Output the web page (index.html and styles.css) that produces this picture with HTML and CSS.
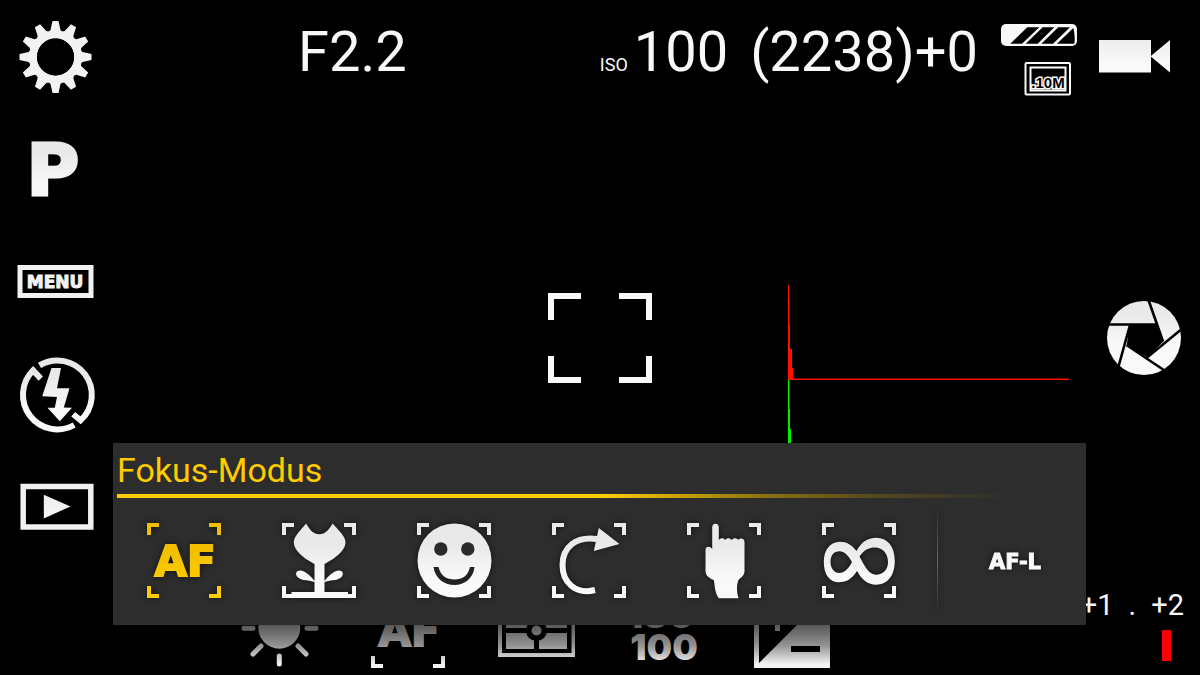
FILE: index.html
```html
<!DOCTYPE html>
<html lang="de">
<head>
    <meta charset="UTF-8">
    <meta name="viewport" content="width=device-width, initial-scale=1.0">
    <title>Kamera</title>
    <link rel="stylesheet" href="styles.css">
</head>
<body>
    <svg class="defs" aria-hidden="true">
        <defs>
            <linearGradient id="light" gradientUnits="userSpaceOnUse" x1="0" y1="0" x2="0" y2="80">
                <stop offset="0.3" stop-color="#e9e9e9"/>
                <stop offset="0.7" stop-color="#f9f9f9"/>
            </linearGradient>
            <linearGradient id="gold" gradientUnits="userSpaceOnUse" x1="0" y1="0" x2="0" y2="76">
                <stop offset="0.3" stop-color="#f0bd00"/>
                <stop offset="0.8" stop-color="#ffcc00"/>
            </linearGradient>
            <linearGradient id="dim" gradientUnits="userSpaceOnUse" x1="0" y1="0" x2="0" y2="76">
                <stop offset="0.4" stop-color="#505050"/>
                <stop offset="0.7" stop-color="#929292"/>
                <stop offset="0.95" stop-color="#f2f2f2"/>
            </linearGradient>
            <g id="corners">
                <path d="M1,13V1H13V5H5V13ZM63,1H75V13H71V5H63ZM1,64V76H13V72H5V64ZM71,64H75V76H63V72H71Z"/>
            </g>
            <polygon id="tooth" points="-3,-36 3,-36 5,-27 8,-24 -8,-24 -5,-27"/>
        </defs>
    </svg>

    <div class="camera">
        <div class="viewfinder">
            <svg class="focus-frame" viewBox="0 0 104 90" aria-hidden="true">
                <path d="M3,27V3H33M71,3H101V27M3,63V87H33M71,87H101V63"/>
            </svg>
        </div>

        <svg class="histogram" viewBox="0 0 282 190" aria-hidden="true">
            <path class="green" d="M0,190V95H1.500V124H2V144H3V190Z"/>
            <path class="red" d="M0,95V0H1V14H1.500V40H2V64H4V83H5V93.500H281V95Z"/>
        </svg>

        <nav class="rail">
            <button class="rail-button" aria-label="Einstellungen">
                <svg class="rail-icon" viewBox="0 0 80 80">
                    <g transform="translate(38.5 41)" fill="#f2f2f2">
                        <use href="#tooth"/>
                        <use href="#tooth" transform="rotate(30)"/>
                        <use href="#tooth" transform="rotate(60)"/>
                        <use href="#tooth" transform="rotate(90)"/>
                        <use href="#tooth" transform="rotate(120)"/>
                        <use href="#tooth" transform="rotate(150)"/>
                        <use href="#tooth" transform="rotate(180)"/>
                        <use href="#tooth" transform="rotate(210)"/>
                        <use href="#tooth" transform="rotate(240)"/>
                        <use href="#tooth" transform="rotate(270)"/>
                        <use href="#tooth" transform="rotate(300)"/>
                        <use href="#tooth" transform="rotate(330)"/>
                        <circle r="22.5" fill="none" stroke="#f2f2f2" stroke-width="8"/>
                        <circle r="18.5" fill="#000"/>
                    </g>
                </svg>
            </button>
            <button class="rail-button">
                <svg class="rail-icon" viewBox="0 0 80 80">
                    <text class="wide-text program" x="36" y="66">P</text>
                </svg>
            </button>
            <button class="rail-button">
                <svg class="rail-icon" viewBox="0 0 80 80">
                    <rect x="3" y="26.5" width="71" height="28" fill="none" stroke="#f2f2f2" stroke-width="5"/>
                    <text class="wide-text menu" x="38" y="47">MENU</text>
                </svg>
            </button>
            <button class="rail-button" aria-label="Blitz">
                <svg class="rail-icon" viewBox="0 0 80 80">
                    <path d="M22.5,11.4A34.5,34.5 0 0 1 63.6,66.4L56.2,60.3M57.2,71A34.5,34.5 0 0 1 16.1,16.4L23.8,24.6" fill="none" stroke="url(#light)" stroke-width="6"/>
                    <polygon points="34.5,14 44,14 40,34.3 52.5,34.3 46.8,53.6 55,53.8 42.8,67.3 30.5,53.8 37.8,53.8 40,43 25.2,42.3" fill="url(#light)"/>
                </svg>
            </button>
            <button class="rail-button" aria-label="Wiedergabe">
                <svg class="rail-icon" viewBox="0 0 80 80">
                    <rect x="6.2" y="20.5" width="67.6" height="40.5" fill="none" stroke="#f0f0f0" stroke-width="5.5"/>
                    <polygon points="26.8,28.7 53.5,40.4 26.8,52.4" fill="url(#light)"/>
                </svg>
            </button>
        </nav>

        <main class="center">
            <header class="readout">
                <span class="value">F2.2</span>
                <div class="readout-right">
                    <span class="value"><small class="unit">ISO</small>100</span>
                    <span class="value">(2238)+0</span>
                    <div class="status">
                        <svg class="battery" viewBox="0 0 78 26" role="img" aria-label="Akku">
                            <rect x="1" y="2" width="76" height="22" rx="5" fill="#f8f8f8"/>
                            <path d="M27.3,5.3H39.3L22,21.7H10.3ZM42.7,5.3H54.3L37.7,21.7H25.7ZM58.3,5.3H70L53,21.7H41.3ZM73.3,6Q75.5,14 74.3,21.7H57Z" fill="#000"/>
                        </svg>
                        <svg class="image-size" viewBox="0 0 54 36">
                            <rect x="1.5" y="2" width="44.5" height="31.5" rx="1" fill="#000" stroke="#f8f8f8" stroke-width="2"/>
                            <rect x="6.5" y="6.5" width="35" height="23" fill="none" stroke="#f8f8f8" stroke-width="2"/>
                            <text class="size-text" x="24" y="27">.10M</text>
                        </svg>
                    </div>
                </div>
            </header>

            <div class="shortcuts">
                <button class="shortcut" aria-label="Weißabgleich">
                    <svg class="icon dim" viewBox="0 0 76 76">
                        <circle cx="37.3" cy="35.7" r="21"/>
                        <path class="rays" d="M2,36.3H11M65,36.3H74M19,54L11,62M56,54L64,62M37.3,64V72M19,18L11,10M56,18L64,10M37.3,8V1"/>
                    </svg>
                </button>
                <button class="shortcut">
                    <svg class="icon dim" viewBox="0 0 76 76">
                        <use href="#corners"/>
                        <text class="wide-text af" x="39" y="54">AF</text>
                    </svg>
                </button>
                <button class="shortcut" aria-label="Belichtungsmessung">
                    <svg class="icon dim" viewBox="0 0 76 76">
                        <path fill-rule="evenodd" d="M0,12H77V65H0ZM4,16V61H73.500V16Z"/>
                        <path d="M8,20H36V36H8ZM41,20H69V36H41ZM8,41H36V57H8ZM41,41H69V57H41Z"/>
                        <circle cx="38.500" cy="38.500" r="10.500" fill="#000"/>
                        <circle cx="38.500" cy="38.500" r="5"/>
                    </svg>
                </button>
                <button class="shortcut">
                    <svg class="icon dim" viewBox="0 0 76 76">
                        <text class="iso-text"><tspan x="38" y="36">ISO</tspan><tspan x="38" y="68">100</tspan></text>
                    </svg>
                </button>
                <button class="shortcut" aria-label="Belichtungskorrektur">
                    <svg class="icon dim" viewBox="0 0 76 76">
                        <path fill-rule="evenodd" d="M0,0H76V76H0ZM5,5V71L71,5ZM37,54V60H66V54Z"/>
                        <path d="M21,10H26V22H38V27H26V39H21V27H9V22H21Z"/>
                    </svg>
                </button>
            </div>
        </main>

        <aside class="side">
            <button class="side-button" aria-label="Video">
                <svg class="side-icon" viewBox="0 0 96 96">
                    <path d="M4,32H56V64.500H4ZM75,32V64.500L55.500,48.200Z" fill="url(#light)"/>
                </svg>
            </button>
            <button class="side-button" aria-label="Auslöser">
                <svg class="side-icon" viewBox="0 0 96 96">
                    <circle cx="49" cy="48" r="37" fill="url(#light)"/>
                    <polygon points="34.5,34.5 62,34.5 68.3,51.5 52.3,67.2 31.700,55.5" fill="#000"/>
                    <path d="M11,34.500H62M53.5,10L68,51.5M88,38L52,67.5M71,81.500L31.5,55M23.500,76.500L35,35" stroke="#000" stroke-width="2.600"/>
                </svg>
            </button>
            <div class="exposure">
                <div class="scale">
                    <span>+1</span>
                    <span>.</span>
                    <span>+2</span>
                </div>
                <div class="marker"></div>
            </div>
        </aside>

        <section class="panel">
            <h2 class="panel-title">Fokus-Modus</h2>
            <div class="panel-modes">
                <button class="mode active">
                    <svg class="icon" viewBox="0 0 76 76">
                        <use href="#corners"/>
                        <text class="wide-text af" x="39" y="54">AF</text>
                    </svg>
                </button>
                <button class="mode" aria-label="Makro">
                    <svg class="icon" viewBox="0 0 76 76">
                        <use href="#corners"/>
                        <path d="M25,1.500C28,6 31,12 38,12.300C45,12.300 48,7 51.800,1.500C56,7 64.500,14 64.500,20C64.500,30 51,38 43.500,42V59C46,55 53,48.500 58,48.500C62.500,48.500 63,53 60,55.500C56,59 48,58 43.500,60V70H67V76H10.500V70H33.500V60C29,58 21,59 17,55.500C14,53 14.500,48.500 19,48.500C24,48.500 31,55 33.500,59V42C26,38 12.800,30 12.800,20C12.800,14 21,7 25,1.500Z"/>
                    </svg>
                </button>
                <button class="mode" aria-label="Gesichtserkennung">
                    <svg class="icon" viewBox="0 0 76 76">
                        <use href="#corners"/>
                        <circle cx="38.500" cy="38.500" r="37"/>
                        <circle cx="24.800" cy="27" r="6.700" fill="#2a2a2a"/>
                        <circle cx="51.800" cy="27" r="6.700" fill="#2a2a2a"/>
                        <path d="M17.500,45H22.500C24.500,54 31,57.500 38.500,57.500C46,57.500 52,54 54,45H58.500C57.500,56 48.500,63 38.500,63C28,63 19,56 17.500,45Z" fill="#222"/>
                    </svg>
                </button>
                <button class="mode" aria-label="Kontinuierlich">
                    <svg class="icon" viewBox="0 0 76 76">
                        <use href="#corners"/>
                        <path class="arc" d="M44,68C24,73 11.500,60 11.500,43C11.500,25 25,14 46,17"/>
                        <polygon points="47.800,6 68.500,22 42.800,29"/>
                    </svg>
                </button>
                <button class="mode" aria-label="Touch-Fokus">
                    <svg class="icon" viewBox="0 0 76 76">
                        <use href="#corners"/>
                        <path d="M26.200,5C26.200,0.500 32.800,0.500 32.800,5V18C34.500,15.500 38,15.500 39,18C41,15.500 44,15.500 45.500,18C47.500,15.500 51,15.500 52,18C54,15.500 58.500,16 58.500,20V49C58.500,54 54,56 52.500,58C50,64 51,71 52.500,76.300H32.800C29,71 29,65 27.800,58C24,56.500 19.500,54 19.500,49V28C19.500,24 24,23.500 26.200,27Z"/>
                    </svg>
                </button>
                <button class="mode" aria-label="Unendlich">
                    <svg class="icon" viewBox="0 0 76 76">
                        <use href="#corners"/>
                        <path fill-rule="evenodd" d="M35.500,29C31,23 26,19.700 19,19.700C9,19.700 2.800,28 2.800,40C2.800,53 9,60.300 18,60.300C26,60.300 31,56.500 36,49C41,58 47,62.700 55,62.700C67,62.700 73.800,53 73.800,39C73.800,24 66,15.700 55.500,15.700C46,15.700 40,20.500 35.500,29ZM31,40C27,47.500 23,51 18.500,51C13,51 9.500,46 9.500,40C9.500,33 13,29.300 18.500,29.300C23,29.300 27,33 31,40ZM38.500,34.500C43,28 48,25.500 54,25.500C62,25.500 67,32 67,40C67,48 62,52.700 55,52.700C48,52.700 44,45 38.500,34.500Z"/>
                    </svg>
                </button>
                <button class="mode lock">AF-L</button>
            </div>
        </section>
    </div>
</body>
</html>
```
FILE: styles.css
```css
* {
    box-sizing: border-box;
}
body {
    margin: 0;
    background: #000;
    color: #f8f8f8;
    font-family: Roboto, sans-serif;
}
button {
    padding: 0;
    border: none;
    background: none;
    color: inherit;
    font: inherit;
    cursor: pointer;
}
svg {
    display: block;
    overflow: visible;
}
.defs {
    position: absolute;
    width: 0;
    height: 0;
}
.camera {
    position: relative;
    display: grid;
    grid-template-columns: 113px 1fr 114px;
    min-height: 100vh;
    overflow: hidden;
}
.wide-text {
    font-family: "DejaVu Sans", sans-serif;
    font-weight: bold;
    text-anchor: middle;
}

/* viewfinder overlays */
.viewfinder {
    position: absolute;
    inset: 0;
    display: grid;
    place-items: center;
    pointer-events: none;
}
.focus-frame {
    width: 104px;
    fill: none;
    stroke: #f8f8f8;
    stroke-width: 6;
}
.histogram {
    position: absolute;
    right: 130px;
    top: 285px;
    width: 282px;
}
.red {
    fill: #ff1000;
}
.green {
    fill: #00f000;
}

/* left rail */
.rail {
    display: grid;
    grid-template-rows: repeat(6, 1fr);
}
.rail-button,
.side-button {
    display: grid;
    place-items: center;
}
.rail-icon {
    width: 80px;
    height: 80px;
}
.program {
    fill: url(#light);
    stroke: url(#light);
    stroke-width: 3;
    font-size: 72px;
}
.menu {
    fill: #f2f2f2;
    stroke: #f2f2f2;
    stroke-width: 1;
    font-size: 17px;
}

/* center column */
.center {
    display: flex;
    flex-direction: column;
    justify-content: space-between;
}
.readout {
    display: flex;
    justify-content: space-between;
    padding: 19px 8px 0 185px;
}
.readout-right {
    display: flex;
    gap: 22px;
}
.value {
    font-size: 56px;
    line-height: 67px;
    white-space: nowrap;
}
.unit {
    margin-right: 6px;
    font-size: 18px;
}
.status {
    display: flex;
    flex-direction: column;
    gap: 13px;
    align-items: flex-end;
    padding-top: 3px;
}
.battery {
    width: 78px;
}
.image-size {
    width: 54px;
}
.size-text {
    font: bold 15px "Liberation Sans", sans-serif;
    text-anchor: middle;
    fill: #000;
    stroke: #f8f8f8;
    stroke-width: 3px;
    paint-order: stroke;
}
.shortcuts {
    display: flex;
    padding: 0 0 7px 103px;
}
.shortcut {
    display: grid;
    place-items: center;
    width: 128px;
}
.icon {
    width: 76px;
    height: 76px;
    fill: url(#light);
}
.dim {
    fill: url(#dim);
}
.rays {
    stroke: url(#dim);
    stroke-width: 5;
    stroke-linecap: round;
}
.af {
    stroke: url(#light);
    stroke-width: 2;
    font-size: 42px;
}
.active .af {
    stroke: url(#gold);
}
.dim .af {
    stroke: url(#dim);
}
.iso-text {
    font-family: Inter, sans-serif;
    font-size: 36px;
    font-weight: 900;
    text-anchor: middle;
}

/* right column */
.side {
    display: grid;
    grid-template-columns: 100%;
    grid-template-rows: 1fr 4fr 1fr;
}
.side-icon {
    width: 96px;
    height: 96px;
}
.exposure {
    display: flex;
    flex-direction: column;
    align-items: flex-end;
    gap: 8px;
    padding: 25px 16px 0 0;
}
.scale {
    display: flex;
    gap: 15px;
    font-size: 29px;
    line-height: 34px;
}
.marker {
    width: 9px;
    height: 31px;
    margin-right: 13px;
    background: #ff0000;
}

/* focus mode menu */
.panel {
    position: absolute;
    left: 113px;
    right: 114px;
    bottom: 50px;
    padding: 8px 0 27px 4px;
    background: #2d2d2d;
}
.panel-title {
    margin: 0;
    padding-bottom: 5px;
    border-bottom: 4px solid;
    border-image: linear-gradient(to right, #ffcc00 50%, #8a7212 67%, #54491f 78%, #2d2d2d 92%) 1;
    color: #ffcc00;
    font-size: 34px;
    font-weight: 400;
    line-height: 38px;
}
.panel-modes {
    display: grid;
    grid-template-columns: repeat(6, 1fr) 160px;
    align-items: center;
    padding-top: 24px;
}
.mode {
    display: grid;
    place-items: center;
    filter: drop-shadow(0 0 3px #111);
}
.mode .arc {
    fill: none;
    stroke: url(#light);
    stroke-width: 6;
}
.active .icon {
    fill: url(#gold);
}
.lock {
    height: 100px;
    margin: -12px 0 -12px 11px;
    padding: 4px 0 0 6px;
    border-left: 1px solid;
    border-image: linear-gradient(#2d2d2d, #666, #2d2d2d) 1;
    font-family: "DejaVu Sans", sans-serif;
    font-size: 21px;
    font-weight: bold;
    -webkit-text-stroke: 1px #f8f8f8;
}
```
